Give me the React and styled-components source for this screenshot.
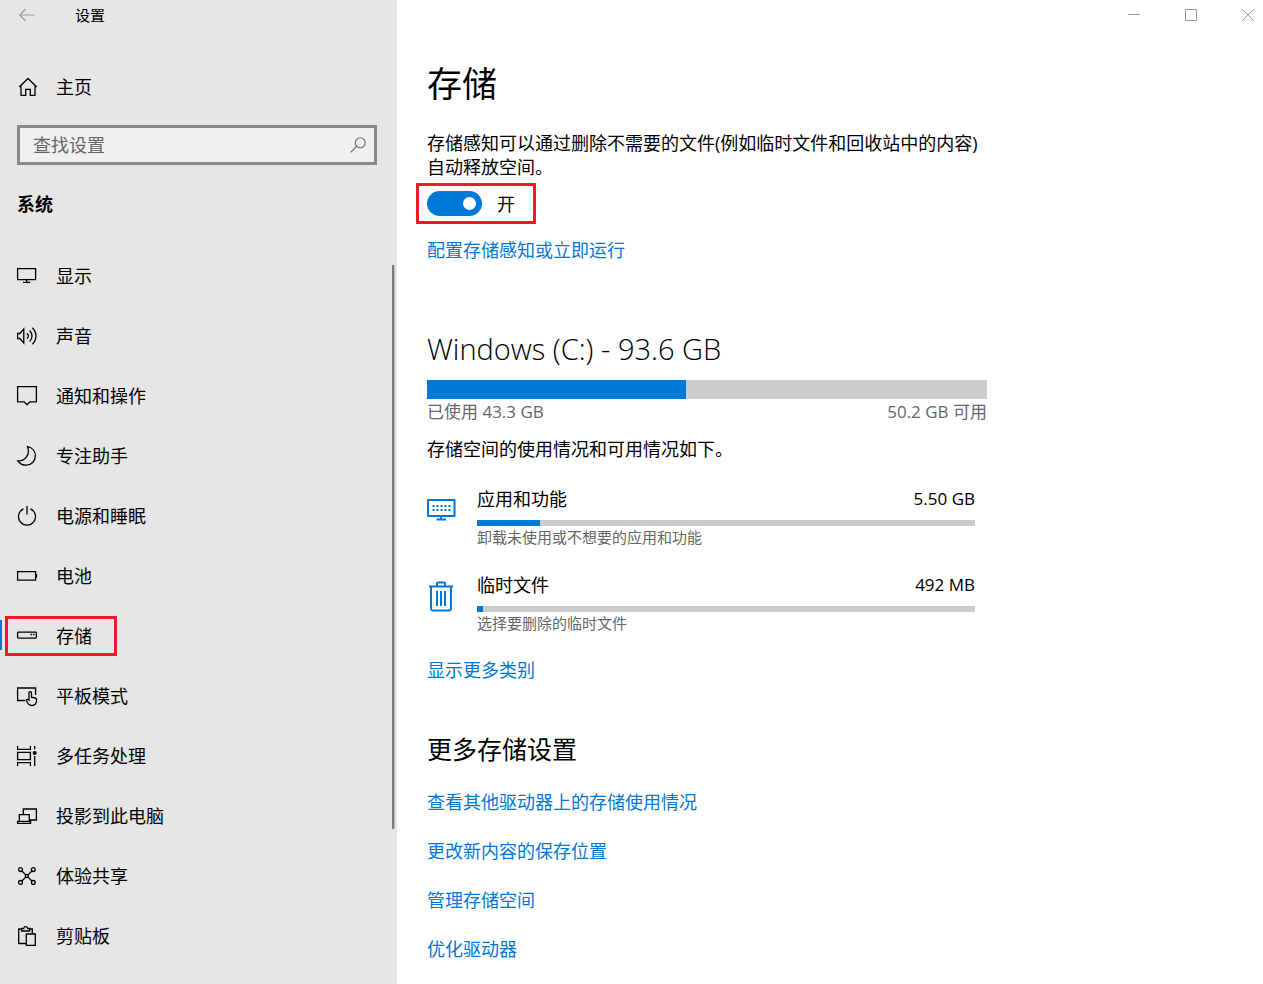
import React, { useState } from 'react'
import styled, { createGlobalStyle } from 'styled-components'

const GlobalStyle = createGlobalStyle`
	*,
	*::before,
	*::after {
		box-sizing: border-box;
	}

	body {
		margin: 0;
		background: #fff;
		color: #000;
		font-family: 'Open Sans', 'Noto Sans CJK SC', sans-serif;
		font-size: 18px;
		line-height: 24px;
	}

	button,
	input {
		font: inherit;
		color: inherit;
	}
`

const Window = styled.div`
	display: flex;
	min-height: 100vh;
`

const Sidebar = styled.aside`
	flex: 0 0 397px;
	background: #e6e6e6;
`

const TitleBar = styled.header`
	display: flex;
	align-items: center;
	gap: 40px;
	height: 30px;
	padding-left: 19px;
	font-size: 15px;
`

const IconButton = styled.button`
	display: flex;
	padding: 0;
	border: 0;
	background: none;
	color: ${props => props.$color || '#999'};
`

const Icon = styled.svg`
	display: block;
	flex: none;
	fill: none;
	stroke: currentColor;
	stroke-width: ${props => props.$stroke || 1.3};
`

const NavLink = styled.a`
	position: relative;
	display: flex;
	align-items: center;
	gap: 18px;
	height: 60px;
	padding-left: 16px;
	color: #000;
	text-decoration: none;

	&[aria-current]::before {
		content: '';
		position: absolute;
		left: 0;
		top: 14px;
		width: 2px;
		height: 30px;
		background: #0078d7;
	}

	&[aria-current]::after {
		content: '';
		position: absolute;
		left: 5px;
		top: 10px;
		width: 112px;
		height: 40px;
		border: 3px solid #ed1c24;
	}
`

const HomeLink = styled(NavLink)`
	margin-top: 27px;
`

const Search = styled.form`
	display: flex;
	align-items: center;
	height: 40px;
	margin: 8px 20px 0 17px;
	padding: 0 8px 0 13px;
	border: 3px solid #898989;
	background: #f0f0f0;
`

const SearchInput = styled.input`
	flex: 1;
	min-width: 0;
	padding: 0;
	border: 0;
	outline: 0;
	background: none;

	&::placeholder {
		color: #666;
		opacity: 1;
	}
`

const Category = styled.h2`
	margin: 27px 17px 30px;
	font-size: 18px;
	font-weight: 700;
	line-height: 24px;
`

const Nav = styled.nav`
	position: relative;
`

const Scrollbar = styled.div`
	position: absolute;
	top: 19px;
	right: 2px;
	width: 3px;
	height: 564px;
	border-right: 1px solid #bbb;
	background: #7a7a7a;
`

const Main = styled.main`
	flex: 1;
	min-width: 0;
`

const WindowControls = styled.div`
	display: flex;
	justify-content: flex-end;
	align-items: center;
	gap: 45px;
	height: 30px;
	padding-right: 9px;
`

const Content = styled.div`
	max-width: 590px;
	padding: 30px 0 22px 30px;
`

const PageTitle = styled.h1`
	margin: 0 0 23px;
	font-size: 35px;
	font-weight: 400;
	line-height: 48px;
`

const Text = styled.p`
	margin: 0;
`

const ToggleLabel = styled.label`
	position: relative;
	display: flex;
	align-items: center;
	gap: 15px;
	width: fit-content;
	margin: 12px 0 22px;

	&::after {
		content: '';
		position: absolute;
		inset: -8px -21px -8px -11px;
		border: 3px solid #ed1c24;
		pointer-events: none;
	}
`

const Toggle = styled.input`
	appearance: none;
	display: flex;
	align-items: center;
	justify-content: flex-start;
	width: 55px;
	height: 25px;
	margin: 0;
	padding: 0 6px;
	border-radius: 13px;
	background: #999;

	&::before {
		content: '';
		width: 13px;
		height: 13px;
		border-radius: 50%;
		background: #fff;
	}

	&:checked {
		justify-content: flex-end;
		background: #0078d7;
	}
`

const Link = styled.a`
	display: block;
	width: fit-content;
	color: #0078d7;
	text-decoration: none;
`

const DriveTitle = styled.h2`
	margin: 67px 0 11px;
	font-size: 29px;
	font-weight: 350;
	line-height: 40px;
`

const Bar = styled.div`
	height: ${props => props.$height};
	background: #ccc;
`

const BarFill = styled.div`
	height: 100%;
	background: #0078d7;
`

const Usage = styled.div`
	display: flex;
	justify-content: space-between;
	margin: 1px 0 13px;
	color: #666;
	font-size: 17px;
`

const Categories = styled.div`
	display: flex;
	flex-direction: column;
	gap: 26px;
	margin: 26px 12px 25px 0;
`

const CategoryRow = styled.div`
	display: flex;
	gap: 20px;
	color: #0078d7;

	> svg {
		margin-top: 8px;
	}
`

const CategoryBody = styled.div`
	flex: 1;
	color: #000;
`

const CategoryHead = styled.div`
	display: flex;
	justify-content: space-between;
	margin-bottom: 9px;
`

const Size = styled.span`
	font-size: 17px;
`

const Hint = styled.p`
	margin: 1px 0 0;
	color: #666;
	font-size: 15px;
	line-height: 20px;
`

const SectionTitle = styled.h2`
	margin: 49px 0 23px;
	font-size: 25px;
	font-weight: 400;
	line-height: 36px;
`

const LinkList = styled.div`
	display: flex;
	flex-direction: column;
	gap: 25px;
`

const navItems = [
	{
		name: '显示',
		icon: <path d='M1.6 3.6h18v11h-18zM10.6 14.6v2.6M7 17.3h7.2' />
	},
	{
		name: '声音',
		icon: (
			<path d='M1.6 8.5h2.2l4-4.6v14.2l-4-4.6H1.6zM11 8.2c1.6 1.7 1.6 3.9 0 5.6M13.6 5.5c3.2 3.2 3.2 7.8 0 11M16.4 2.8c4.8 4.8 4.8 11.6 0 16.4' />
		)
	},
	{
		name: '通知和操作',
		icon: <path d='M1.6 1.7h18.8v15.2h-6.6L11 19.8l-2.8-2.9H1.6z' />
	},
	{
		name: '专注助手',
		icon: (
			<path d='M11.6 1.7c4.6 1 7.8 4.7 7.8 9.1 0 5.2-4.1 9.4-9.3 9.4-3.400 0-6.500-1.700-8.300-4.400 7.400.6 12.600-6.400 9.800-14.100z' />
		)
	},
	{
		name: '电源和睡眠',
		icon: <path d='M11 1v8.5M7.5 3.9a8.5 8.5 0 1 0 7 0' />
	},
	{
		name: '电池',
		icon: <path d='M1.6 6.6h18v8.500h-18zM20.500 9v3.800' />
	},
	{
		name: '存储',
		current: true,
		icon: (
			<>
				<rect x='1.6' y='7.1' width='18.8' height='6' rx='.8' />
				<path d='M14.5 9.5h1.6M17 9.5h1.6' />
			</>
		)
	},
	{
		name: '平板模式',
		icon: (
			<>
				<path d='M9.5 15.5H1.6V3h18v7' />
				<path d='M13 15V7.8c0-1.7 2.5-1.7 2.5 0v4.400l3.600.8c1 .2 1.500.8 1.500 1.800 0 3.800-1.600 5.700-4.900 5.700-3 0-4.100-1.500-5-4.600-.4-1.500 1-2.200 2.300-.9z' />
			</>
		)
	},
	{
		name: '多任务处理',
		icon: (
			<>
				<path d='M1.6 1v3.300h12.800V1M1.600 7.300h12.800v7.400H1.600zM1.600 21v-3.300h12.800V21M18.700 1v3.300M18.700 11v10' />
				<circle cx='18.7' cy='8' r='1.4' fill='currentColor' />
			</>
		)
	},
	{
		name: '投影到此电脑',
		icon: (
			<path d='M7.3 9.5V4h13.100v11h-6.600M3.300 15.800V9.700h10v6.100M1.600 16.300h13v2h-13z' />
		)
	},
	{
		name: '体验共享',
		icon: (
			<>
				<circle cx='4.5' cy='4.6' r='1.9' />
				<circle cx='17.3' cy='4.6' r='1.9' />
				<circle cx='4.5' cy='17.4' r='1.9' />
				<circle cx='17.3' cy='17.4' r='1.9' />
				<rect x='9.5' y='9.6' width='2.8' height='2.8' />
				<path d='M5.9 6l3.6 3.6M15.9 6l-3.6 3.6M5.9 16l3.6-3.6M15.9 16l-3.6-3.6' />
			</>
		)
	},
	{
		name: '剪贴板',
		icon: (
			<path d='M9.9 18.5H2.7V4h3M13.5 4h2.8v4.700M5.700 6V3.500h2c.4-2.500 3.600-2.500 4 0h2V6zM10.300 9h9v11.300h-9z' />
		)
	}
]

const categories = [
	{
		name: '应用和功能',
		size: '5.50 GB',
		percent: 12.7,
		hint: '卸载未使用或不想要的应用和功能',
		icon: (
			<>
				<path d='M1 5h26.5v16H1zM14 21v3.500M9.500 24.500h9.500' />
				<path d='M5.5 11h18M5.5 15h18' strokeDasharray='2 2' />
			</>
		)
	},
	{
		name: '临时文件',
		size: '492 MB',
		percent: 1.2,
		hint: '选择要删除的临时文件',
		icon: (
			<path d='M2 5.500h24M10 5.500V2.500c0-.8.300-1 1-1h6c.7 0 1 .2 1 1v3M4 5.500v22c0 1.500.5 2 2 2h16c1.500 0 2-.5 2-2v-22M10 10v15M14 10v15M18 10v15' />
		)
	}
]

const moreLinks = [
	'查看其他驱动器上的存储使用情况',
	'更改新内容的保存位置',
	'管理存储空间',
	'优化驱动器'
]

function SideMenu() {
	return (
		<Sidebar>
			<TitleBar>
				<IconButton aria-label='返回'>
					<Icon width='16' height='14' viewBox='0 0 16 14' $stroke={1.1}>
						<path d='M6.5 1L.8 7l5.7 6M.8 7h14.700' />
					</Icon>
				</IconButton>
				<span>设置</span>
			</TitleBar>
			<HomeLink href='#home'>
				<Icon width='22' height='22' viewBox='0 0 22 22'>
					<path d='M3.2 11L12 2.5l8.8 8.5M5 9.500v9.800h4.700v-6h4.600v6H19V9.500' />
				</Icon>
				主页
			</HomeLink>
			<Search role='search' onSubmit={e => e.preventDefault()}>
				<SearchInput
					type='text'
					name='search'
					placeholder='查找设置'
					aria-label='查找设置'
				/>
				<IconButton aria-label='搜索' $color='#666'>
					<Icon width='16' height='16' viewBox='0 0 16 16' $stroke={1.1}>
						<circle cx='10.2' cy='5.8' r='5' />
						<path d='M6.6 9.4l-6 6' />
					</Icon>
				</IconButton>
			</Search>
			<Category>系统</Category>
			<Nav>
				{navItems.map(item => (
					<NavLink
						key={item.name}
						href='#nav'
						aria-current={item.current ? 'page' : undefined}>
						<Icon width='22' height='22' viewBox='0 0 22 22'>
							{item.icon}
						</Icon>
						{item.name}
					</NavLink>
				))}
				<Scrollbar />
			</Nav>
		</Sidebar>
	)
}

function StorageCategory({ item }) {
	return (
		<CategoryRow>
			<Icon width='30' height='32' viewBox='0 0 30 32' $stroke={2}>
				{item.icon}
			</Icon>
			<CategoryBody>
				<CategoryHead>
					<span>{item.name}</span>
					<Size>{item.size}</Size>
				</CategoryHead>
				<Bar $height='6px'>
					<BarFill style={{ width: `${item.percent}%` }} />
				</Bar>
				<Hint>{item.hint}</Hint>
			</CategoryBody>
		</CategoryRow>
	)
}

function App() {
	const [enabled, setEnabled] = useState(true)

	return (
		<Window lang='zh-CN'>
			<GlobalStyle />
			<SideMenu />
			<Main>
				<WindowControls>
					<IconButton aria-label='最小化'>
						<Icon width='12' height='12' viewBox='0 0 12 12' $stroke={1}>
							<path d='M0 5.5h12' />
						</Icon>
					</IconButton>
					<IconButton aria-label='最大化'>
						<Icon width='12' height='12' viewBox='0 0 12 12' $stroke={1}>
							<path d='M.5.5h11v11H.5z' />
						</Icon>
					</IconButton>
					<IconButton aria-label='关闭'>
						<Icon width='12' height='12' viewBox='0 0 12 12' $stroke={1}>
							<path d='M0 0l12 12M12 0L0 12' />
						</Icon>
					</IconButton>
				</WindowControls>
				<Content>
					<PageTitle>存储</PageTitle>
					<Text>
						存储感知可以通过删除不需要的文件(例如临时文件和回收站中的内容)自动释放空间。
					</Text>
					<ToggleLabel>
						<Toggle
							type='checkbox'
							role='switch'
							checked={enabled}
							onChange={e => setEnabled(e.target.checked)}
						/>
						{enabled ? '开' : '关'}
					</ToggleLabel>
					<Link href='#sense'>配置存储感知或立即运行</Link>

					<DriveTitle>Windows (C:) - 93.6 GB</DriveTitle>
					<Bar $height='19px'>
						<BarFill style={{ width: '46.25%' }} />
					</Bar>
					<Usage>
						<span>已使用 43.3 GB</span>
						<span>50.2 GB 可用</span>
					</Usage>
					<Text>存储空间的使用情况和可用情况如下。</Text>
					<Categories>
						{categories.map(item => (
							<StorageCategory key={item.name} item={item} />
						))}
					</Categories>
					<Link href='#categories'>显示更多类别</Link>

					<SectionTitle>更多存储设置</SectionTitle>
					<LinkList>
						{moreLinks.map(text => (
							<Link key={text} href='#more'>
								{text}
							</Link>
						))}
					</LinkList>
				</Content>
			</Main>
		</Window>
	)
}

export default App
